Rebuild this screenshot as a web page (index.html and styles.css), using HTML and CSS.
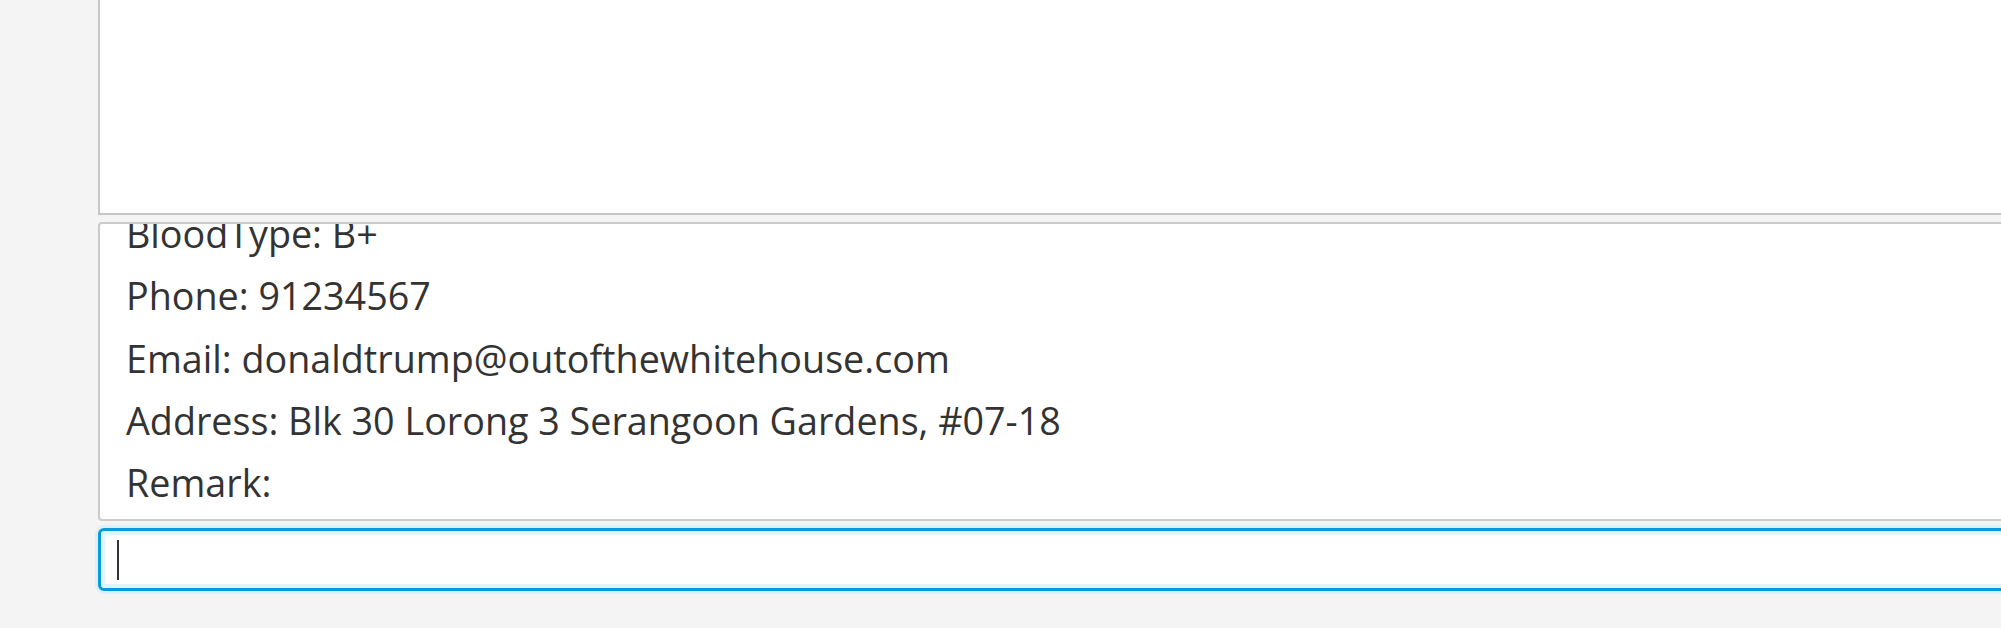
FILE: index.html
```html
<!DOCTYPE html>
<html lang="en">
<head>
<meta charset="utf-8">
<title>Address Book</title>
<link rel="stylesheet" href="styles.css">
</head>
<body>
<div class="app">
  <div class="browser-panel"></div>
  <div class="details-panel">
    <div class="details-list">
      <div class="row">BloodType: B+</div>
      <div class="row">Phone: 91234567</div>
      <div class="row">Email: donaldtrump@outofthewhitehouse.com</div>
      <div class="row">Address: Blk 30 Lorong 3 Serangoon Gardens, #07-18</div>
      <div class="row">Remark:</div>
    </div>
  </div>
  <div class="command-box">
    <span class="caret"></span>
  </div>
</div>
</body>
</html>
```

FILE: styles.css
```css
html, body {
  margin: 0;
  padding: 0;
  height: 100%;
  overflow: hidden;
  background: #f4f4f4;
}

.app {
  display: flex;
  flex-direction: column;
  padding-left: 98px;
  width: 2100px;
  font-family: "Open Sans", "Noto Sans", sans-serif;
  color: #333333;
}

.browser-panel {
  height: 225px;
  margin-top: -10px;
  background: #ffffff;
  border: 2px solid #c6c6c6;
  box-sizing: border-box;
}

.details-panel {
  margin-top: 7px;
  height: 299px;
  box-sizing: border-box;
  background: #ffffff;
  border: 2px solid #cbcbcb;
  border-radius: 4px;
  overflow: hidden;
}

.details-list {
  margin-top: -21px;
  padding-left: 26px;
}

.row {
  font-size: 37.7px;
  line-height: 62.3px;
  white-space: nowrap;
}

.command-box {
  margin-top: 7px;
  height: 63px;
  box-sizing: border-box;
  background: #ffffff;
  border: 3px solid #0a9ad8;
  border-radius: 6px;
  box-shadow: 0 0 0 3px #dcf0f9, inset 0 0 0 4px #e2f3fb;
  display: flex;
  align-items: center;
  padding-left: 16px;
}

.caret {
  width: 2px;
  height: 40px;
  background: #333333;
}
```
